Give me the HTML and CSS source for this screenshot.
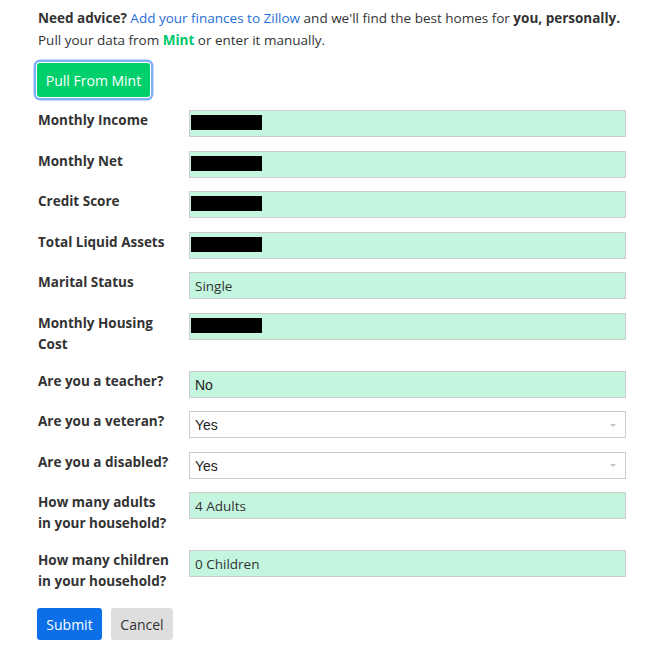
FILE: index.html
```html
<!DOCTYPE html>
<html>
<head>
<meta charset="utf-8">
<link rel="stylesheet" href="styles.css">
</head>
<body>
<div class="page">
  <p class="intro"><strong>Need advice?</strong> <a class="link" href="#">Add your finances to Zillow</a> and we'll find the best homes for <strong>you, personally.</strong><br>Pull your data from <strong class="mint">Mint</strong> or enter it manually.</p>
  <button class="btn-mint" type="button">Pull From Mint</button>
  <div class="form">
    <div class="row"><div class="label">Monthly Income</div><div class="field redacted"><span class="redact"></span></div></div>
    <div class="row"><div class="label">Monthly Net</div><div class="field redacted"><span class="redact"></span></div></div>
    <div class="row"><div class="label">Credit Score</div><div class="field redacted"><span class="redact"></span></div></div>
    <div class="row"><div class="label">Total Liquid Assets</div><div class="field redacted"><span class="redact"></span></div></div>
    <div class="row"><div class="label">Marital Status</div><div class="field">Single</div></div>
    <div class="row"><div class="label">Monthly Housing<br>Cost</div><div class="field redacted"><span class="redact"></span></div></div>
    <div class="row"><div class="label">Are you a teacher?</div><div class="field sys">No</div></div>
    <div class="row"><div class="label">Are you a veteran?</div><div class="field sys select"><span>Yes</span><span class="arrow"></span></div></div>
    <div class="row"><div class="label">Are you a disabled?</div><div class="field sys select"><span>Yes</span><span class="arrow"></span></div></div>
    <div class="row"><div class="label">How many adults<br>in your household?</div><div class="field">4 Adults</div></div>
    <div class="row"><div class="label">How many children<br>in your household?</div><div class="field">0 Children</div></div>
  </div>
  <div class="actions">
    <button class="btn btn-submit" type="button">Submit</button>
    <button class="btn btn-cancel" type="button">Cancel</button>
  </div>
</div>
</body>
</html>
```
FILE: styles.css
```css
html, body {
  margin: 0;
  padding: 0;
  background: #fff;
}
body {
  font-family: "Open Sans", "Liberation Sans", sans-serif;
  font-size: 13.5px;
  color: #333;
}
.page {
  padding: 7px 34px 0 38px;
  width: 588px;
}
.intro {
  margin: 0;
  line-height: 22px;
  white-space: nowrap;
}
.intro strong {
  font-weight: 700;
}
.link {
  color: #1f6fd8;
  text-decoration: none;
}
.mint {
  color: #00c76a;
}
.btn-mint {
  display: block;
  margin: 12px 0 0 -1px;
  width: 113px;
  height: 34px;
  padding: 0;
  border: none;
  border-radius: 3px;
  background: #00d06c;
  color: #fff;
  font-family: "Open Sans", "Liberation Sans", sans-serif;
  font-size: 14px;
  box-shadow: 0 0 0 1px #fff, 0 0 0 3.5px #7fb2f5;
}
.form {
  margin-top: 13px;
}
.row {
  display: flex;
  align-items: flex-start;
  margin-bottom: 13.5px;
}
.label {
  width: 151px;
  flex: none;
  font-weight: 700;
  line-height: 21px;
  margin-top: 0;
  margin-bottom: 2.5px;
  white-space: nowrap;
}
.field {
  box-sizing: border-box;
  width: 437px;
  height: 27px;
  border: 1px solid #ccc;
  background: #c3f5df;
  padding: 1px 5px 0;
  line-height: 24px;
  color: #333;
}
.field.redacted {
  padding: 0 1px;
}
.redact {
  display: block;
  margin-top: 4px;
  width: 71px;
  height: 15px;
  background: #000;
}
.sys {
  font-family: "Liberation Sans", Arial, sans-serif;
  font-size: 14px;
  color: #222;
}
.select {
  background: #fff;
  display: flex;
  justify-content: space-between;
  align-items: center;
  padding-right: 9px;
}
.arrow {
  width: 0;
  height: 0;
  border-left: 3px solid transparent;
  border-right: 3px solid transparent;
  border-top: 3px solid #c4c4c4;
}
.actions {
  display: flex;
  gap: 9px;
  margin-top: 0;
  margin-left: -1px;
}
.btn {
  height: 32px;
  border: none;
  border-radius: 3px;
  padding: 0 8px;
  font-family: "Open Sans", "Liberation Sans", sans-serif;
  font-size: 14px;
}
.btn-submit {
  background: #0c6fe8;
  color: #fff;
  width: 65px;
}
.btn-cancel {
  background: #dedede;
  color: #333;
  width: 62px;
}
```
